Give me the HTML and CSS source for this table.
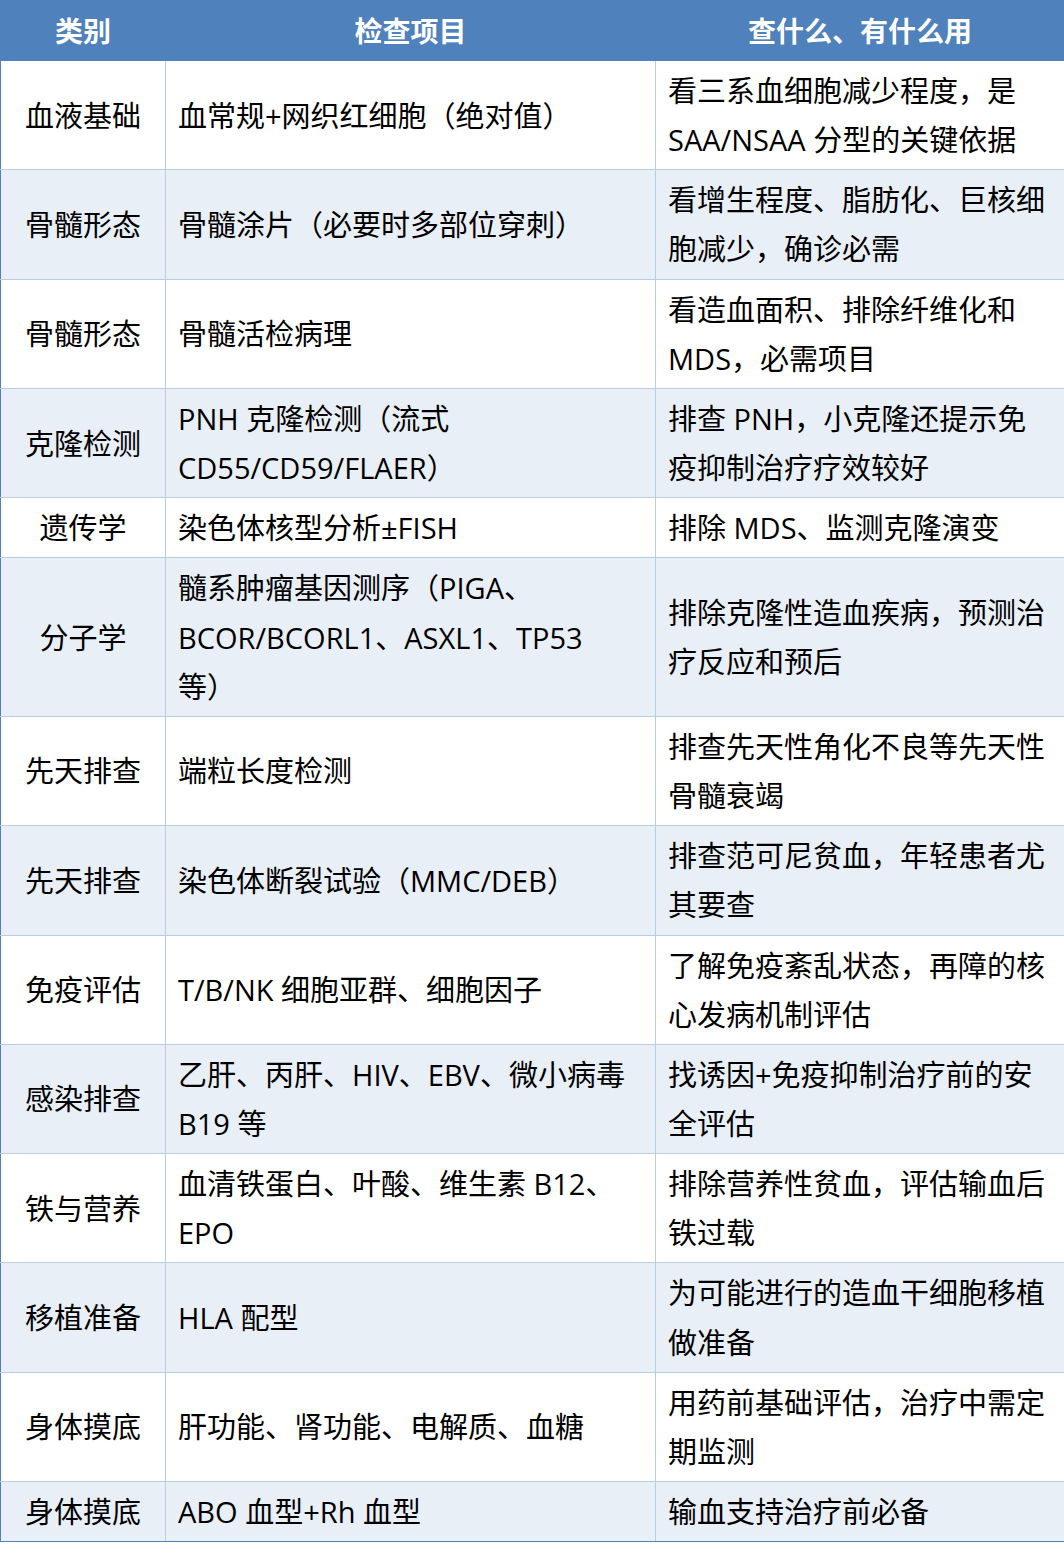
FILE: index.html
```html
<!DOCTYPE html>
<html lang="zh-CN">
<head>
<meta charset="utf-8">
<title>再障检查项目</title>
<link rel="stylesheet" href="styles.css">
</head>
<body>
<table class="tbl">
  <colgroup>
    <col class="c1">
    <col class="c2">
    <col class="c3">
  </colgroup>
  <thead>
    <tr><th>类别</th><th>检查项目</th><th>查什么、有什么用</th></tr>
  </thead>
  <tbody>
    <tr><td class="cat">血液基础</td><td>血常规+网织红细胞（绝对值）</td><td>看三系血细胞减少程度，是<br>SAA/NSAA 分型的关键依据</td></tr>
    <tr><td class="cat">骨髓形态</td><td>骨髓涂片（必要时多部位穿刺）</td><td>看增生程度、脂肪化、巨核细<br>胞减少，确诊必需</td></tr>
    <tr><td class="cat">骨髓形态</td><td>骨髓活检病理</td><td>看造血面积、排除纤维化和<br>MDS，必需项目</td></tr>
    <tr><td class="cat">克隆检测</td><td>PNH 克隆检测（流式<br>CD55/CD59/FLAER）</td><td>排查 PNH，小克隆还提示免<br>疫抑制治疗疗效较好</td></tr>
    <tr><td class="cat">遗传学</td><td>染色体核型分析±FISH</td><td>排除 MDS、监测克隆演变</td></tr>
    <tr><td class="cat">分子学</td><td>髓系肿瘤基因测序（PIGA、<br>BCOR/BCORL1、ASXL1、TP53<br>等）</td><td>排除克隆性造血疾病，预测治<br>疗反应和预后</td></tr>
    <tr><td class="cat">先天排查</td><td>端粒长度检测</td><td>排查先天性角化不良等先天性<br>骨髓衰竭</td></tr>
    <tr><td class="cat">先天排查</td><td>染色体断裂试验（MMC/DEB）</td><td>排查范可尼贫血，年轻患者尤<br>其要查</td></tr>
    <tr><td class="cat">免疫评估</td><td>T/B/NK 细胞亚群、细胞因子</td><td>了解免疫紊乱状态，再障的核<br>心发病机制评估</td></tr>
    <tr><td class="cat">感染排查</td><td>乙肝、丙肝、HIV、EBV、微小病毒<br>B19 等</td><td>找诱因+免疫抑制治疗前的安<br>全评估</td></tr>
    <tr><td class="cat">铁与营养</td><td>血清铁蛋白、叶酸、维生素 B12、<br>EPO</td><td>排除营养性贫血，评估输血后<br>铁过载</td></tr>
    <tr><td class="cat">移植准备</td><td>HLA 配型</td><td>为可能进行的造血干细胞移植<br>做准备</td></tr>
    <tr><td class="cat">身体摸底</td><td>肝功能、肾功能、电解质、血糖</td><td>用药前基础评估，治疗中需定<br>期监测</td></tr>
    <tr><td class="cat">身体摸底</td><td>ABO 血型+Rh 血型</td><td>输血支持治疗前必备</td></tr>
  </tbody>
</table>
</body>
</html>
```

FILE: styles.css
```css
html, body {
  margin: 0;
  padding: 0;
  background: #ffffff;
}

.tbl {
  width: 1064px;
  table-layout: fixed;
  border-collapse: collapse;
  border: 1px solid #4f81bd;
  font-family: "Open Sans", "Noto Sans CJK SC", "Noto Sans", sans-serif;
  font-size: 29px;
  line-height: 49.15px;
  color: #000000;
}

.c1 { width: 165px; }
.c2 { width: 490px; }
.c3 { width: 409px; }

.tbl th {
  height: 48px;
  background: #4f81bd;
  color: #ffffff;
  font-family: "Noto Sans CJK SC", sans-serif;
  font-weight: bold;
  font-size: 28px;
  line-height: 48px;
  text-align: center;
  padding: 5px 0 6px;
  border: 1px solid #4f81bd;
  border-left: 1px solid #b8cce4;
}

.tbl th:first-child {
  border-left: 1px solid #4f81bd;
}

.tbl td {
  padding: 5px 12px;
  border: 1px solid #b8cce4;
  vertical-align: middle;
  text-align: left;
  word-break: break-all;
}

.tbl td.cat {
  text-align: center;
  padding: 5px 0;
}

.tbl tbody tr:nth-child(even) td {
  background: #e9eff7;
}

.tbl tbody tr:last-child td {
  border-bottom: 1px solid #4f81bd;
}

.tbl tbody tr td:first-child {
  border-left: 1px solid #4f81bd;
}

.tbl tbody tr td:last-child {
  border-right: 1px solid #4f81bd;
}
```
